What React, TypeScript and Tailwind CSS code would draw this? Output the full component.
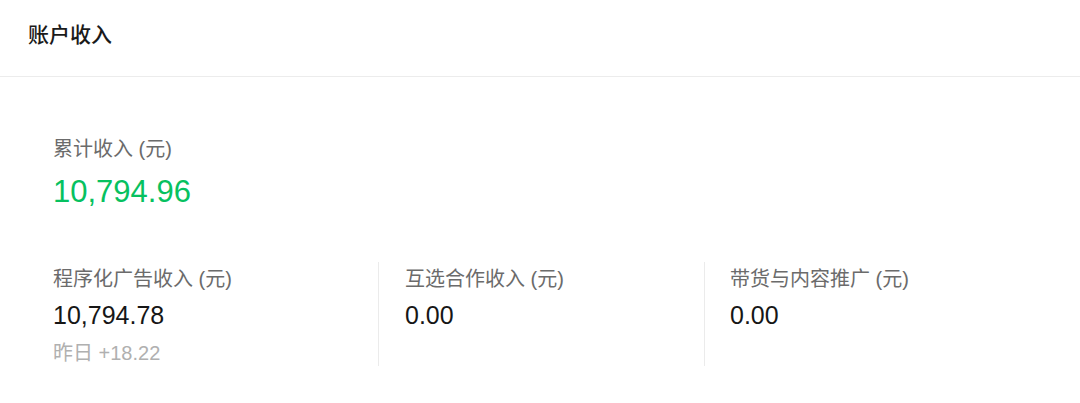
import React from "react";

const font = { fontFamily: '"Liberation Sans", "Noto Sans CJK SC", sans-serif' };

export default function App() {
  const cols = [
    { label: "程序化广告收入 (元)", value: "10,794.78", sub: "昨日 +18.22" },
    { label: "互选合作收入 (元)", value: "0.00" },
    { label: "带货与内容推广 (元)", value: "0.00" },
  ];
  return (
    <div className="w-[1080px] h-[403px] bg-white text-[#111]" style={font}>
      {/* Header */}
      <div className="h-[77px] border-b border-[#ececec] pl-[28px] flex items-center">
        <span className="text-[21px] font-medium text-[#1a1a1a] leading-none pb-[7px]">账户收入</span>
      </div>

      <div className="pl-[53px] pt-[60px]">
        <div className="text-[20px] text-[#6b6b6b] leading-[24px]">累计收入 (元)</div>
        <div className="text-[31px] text-[#07c160] leading-[36px] mt-[13px]">10,794.96</div>

        {/* Breakdown */}
        <div className="flex mt-[52px]">
          {cols.map((c, i) => (
            <div
              key={i}
              className={
                i === 0
                  ? "w-[325px] h-[104px] pt-[5px]"
                  : i === 1
                  ? "w-[326px] h-[104px] border-l border-[#ebebeb] pl-[26px] pt-[5px]"
                  : "flex-1 h-[104px] border-l border-[#ebebeb] pl-[25px] pt-[5px]"
              }
            >
              <div className="text-[20px] text-[#6b6b6b] leading-[24px]">{c.label}</div>
              <div className="text-[25px] text-[#161616] leading-[30px] mt-[9px]">{c.value}</div>
              {c.sub && (
                <div className="text-[20px] text-[#b0b0b0] leading-[24px] mt-[11px]">{c.sub}</div>
              )}
            </div>
          ))}
        </div>
      </div>
    </div>
  );
}
